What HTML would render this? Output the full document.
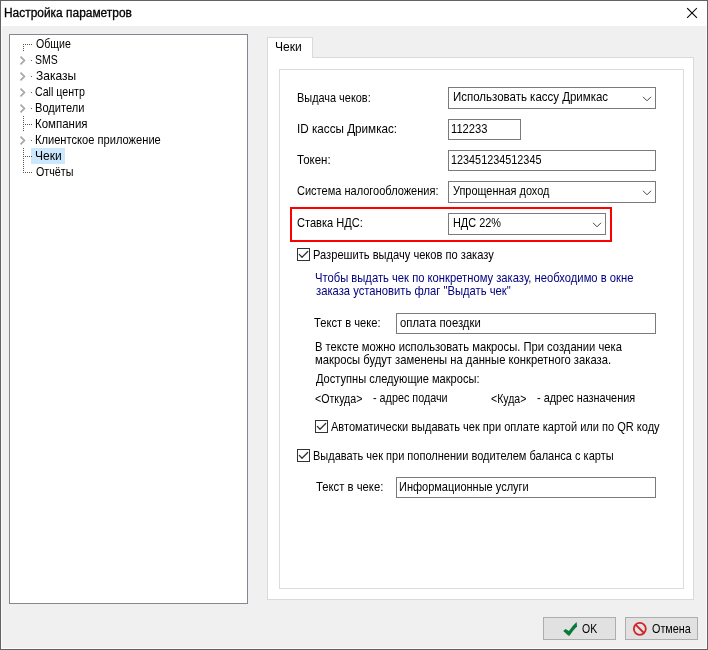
<!DOCTYPE html>
<html lang="ru"><head><meta charset="utf-8"><title>Настройка параметров</title><style>
html,body{margin:0;padding:0}
body{width:708px;height:650px;background:#626262;position:relative;overflow:hidden;font-family:"Liberation Sans",sans-serif}
.b{position:absolute;box-sizing:border-box}
.t{position:absolute;white-space:pre;line-height:16px;transform-origin:0 0;display:block}
.tl{position:absolute;left:0;top:0;width:708px;height:650px;will-change:transform}
.dh{background:repeating-linear-gradient(to right,#555 0 1px,transparent 1px 2px)}
.dv{background:repeating-linear-gradient(to bottom,#555 0 1px,transparent 1px 2px)}
</style></head>
<body>
<div class="b" style="left:1px;top:1px;width:706px;height:648px;background:#f0f0f0;border:1px solid #fbfbfb"></div>
<div class="b" style="left:1px;top:1px;width:706px;height:25px;background:#fff"></div>
<svg class="b" style="left:686px;top:7px" width="13" height="13" viewBox="0 0 13 13"><path d="M1.5 1.4 L10.5 10.4 M10.5 1.4 L1.5 10.4" stroke="#000" stroke-width="1.05" stroke-linecap="square" fill="none"/></svg>
<div class="b" style="left:9px;top:34px;width:239px;height:570px;border:1px solid #828790;background:#fff;"></div>
<div class="b" style="left:31px;top:148px;width:34px;height:16px;background:#cce8ff"></div>
<div class="b dh" style="left:23px;top:44px;width:9px;height:1px"></div>
<svg class="b" style="left:18px;top:54px" width="10" height="12" viewBox="0 0 10 12"><path d="M2.5 2.6 L6.4 6.5 L2.5 10.4" stroke="#a6a6a6" stroke-width="1.7" fill="none"/></svg>
<div class="b" style="left:31px;top:60px;width:1px;height:1px;background:#555"></div>
<svg class="b" style="left:18px;top:70px" width="10" height="12" viewBox="0 0 10 12"><path d="M2.5 2.6 L6.4 6.5 L2.5 10.4" stroke="#a6a6a6" stroke-width="1.7" fill="none"/></svg>
<div class="b" style="left:31px;top:76px;width:1px;height:1px;background:#555"></div>
<svg class="b" style="left:18px;top:86px" width="10" height="12" viewBox="0 0 10 12"><path d="M2.5 2.6 L6.4 6.5 L2.5 10.4" stroke="#a6a6a6" stroke-width="1.7" fill="none"/></svg>
<div class="b" style="left:31px;top:92px;width:1px;height:1px;background:#555"></div>
<svg class="b" style="left:18px;top:102px" width="10" height="12" viewBox="0 0 10 12"><path d="M2.5 2.6 L6.4 6.5 L2.5 10.4" stroke="#a6a6a6" stroke-width="1.7" fill="none"/></svg>
<div class="b" style="left:31px;top:108px;width:1px;height:1px;background:#555"></div>
<div class="b dh" style="left:23px;top:124px;width:9px;height:1px"></div>
<svg class="b" style="left:18px;top:134px" width="10" height="12" viewBox="0 0 10 12"><path d="M2.5 2.6 L6.4 6.5 L2.5 10.4" stroke="#a6a6a6" stroke-width="1.7" fill="none"/></svg>
<div class="b" style="left:31px;top:140px;width:1px;height:1px;background:#555"></div>
<div class="b dh" style="left:23px;top:156px;width:9px;height:1px"></div>
<div class="b dh" style="left:23px;top:172px;width:9px;height:1px"></div>
<div class="b dv" style="left:23px;top:44px;width:1px;height:8px"></div>
<div class="b dv" style="left:23px;top:116px;width:1px;height:15px"></div>
<div class="b dv" style="left:23px;top:148px;width:1px;height:25px"></div>
<div class="b" style="left:267px;top:57px;width:427px;height:543px;border:1px solid #d9d9d9;background:#fff;"></div>
<div class="b" style="left:267px;top:37px;width:46px;height:21px;border:1px solid #d9d9d9;background:#fff;border-bottom:none;height:21px"></div>
<div class="b" style="left:279px;top:69px;width:405px;height:520px;border:1px solid #dcdcdc;background:#fff;"></div>
<div class="b" style="left:448px;top:87px;width:208px;height:22px;border:1px solid #7a7a7a;background:#fff;"></div><svg class="b" style="left:641px;top:93px" width="12" height="10" viewBox="0 0 12 10"><path d="M2 3.8 L6 7.8 L10 3.8" stroke="#444" stroke-width="1" fill="none"/></svg>
<div class="b" style="left:448px;top:119px;width:73px;height:21px;border:1px solid #7a7a7a;background:#fff;"></div>
<div class="b" style="left:448px;top:150px;width:208px;height:21px;border:1px solid #7a7a7a;background:#fff;"></div>
<div class="b" style="left:448px;top:181px;width:208px;height:22px;border:1px solid #7a7a7a;background:#fff;"></div><svg class="b" style="left:641px;top:187px" width="12" height="10" viewBox="0 0 12 10"><path d="M2 3.8 L6 7.8 L10 3.8" stroke="#444" stroke-width="1" fill="none"/></svg>
<div class="b" style="left:448px;top:213px;width:158px;height:22px;border:1px solid #7a7a7a;background:#fff;"></div><svg class="b" style="left:591px;top:219px" width="12" height="10" viewBox="0 0 12 10"><path d="M2 3.8 L6 7.8 L10 3.8" stroke="#444" stroke-width="1" fill="none"/></svg>
<div class="b" style="left:290px;top:207px;width:322px;height:35px;border:2px solid #f00"></div>
<div class="b" style="left:297px;top:248px;width:13px;height:13px;border:1px solid #333;background:#fff"></div><svg class="b" style="left:297px;top:248px" width="13" height="13" viewBox="0 0 13 13"><path d="M2.3 6.4 L5 9.3 L10.7 3.5" stroke="#333" stroke-width="1.3" stroke-linecap="round" stroke-linejoin="round" fill="none"/></svg>
<div class="b" style="left:315px;top:420px;width:13px;height:13px;border:1px solid #333;background:#fff"></div><svg class="b" style="left:315px;top:420px" width="13" height="13" viewBox="0 0 13 13"><path d="M2.3 6.4 L5 9.3 L10.7 3.5" stroke="#333" stroke-width="1.3" stroke-linecap="round" stroke-linejoin="round" fill="none"/></svg>
<div class="b" style="left:297px;top:449px;width:13px;height:13px;border:1px solid #333;background:#fff"></div><svg class="b" style="left:297px;top:449px" width="13" height="13" viewBox="0 0 13 13"><path d="M2.3 6.4 L5 9.3 L10.7 3.5" stroke="#333" stroke-width="1.3" stroke-linecap="round" stroke-linejoin="round" fill="none"/></svg>
<div class="b" style="left:396px;top:313px;width:260px;height:21px;border:1px solid #7a7a7a;background:#fff;"></div>
<div class="b" style="left:396px;top:477px;width:260px;height:21px;border:1px solid #7a7a7a;background:#fff;"></div>
<div class="b" style="left:543px;top:617px;width:73px;height:23px;border:1px solid #adadad;background:#e1e1e1;"></div>
<div class="b" style="left:625px;top:617px;width:73px;height:23px;border:1px solid #adadad;background:#e1e1e1;"></div>
<svg class="b" style="left:555px;top:614px" width="30" height="30" viewBox="0 0 30 30"><path d="M8.2 17 L10.6 15 L13.9 17.1 Q17.4 11.6 21.6 7.9 L22.1 12.8 L21 13.6 Q17.6 17 14.5 21.8 L13.2 21.4 Z" fill="#0a7a3c"/></svg>
<svg class="b" style="left:630px;top:619px" width="20" height="20" viewBox="0 0 20 20"><circle cx="9.8" cy="9.8" r="6" stroke="#d2232a" stroke-width="1.8" fill="none"/><path d="M5.6 5.6 L14 14" stroke="#d2232a" stroke-width="1.8"/></svg>
<div class="tl">
<span class="t" style="left:3.51px;top:5.03px;font-size:12px;color:#000;transform:scaleX(0.9941);-webkit-text-stroke:0.3px #000;">Настройка параметров</span>
<span class="t" style="left:35.59px;top:35.70px;font-size:13px;color:#000;transform:scaleX(0.8144);">Общие</span>
<span class="t" style="left:35.40px;top:51.70px;font-size:13px;color:#000;transform:scaleX(0.8037);">SMS</span>
<span class="t" style="left:35.54px;top:67.70px;font-size:13px;color:#000;transform:scaleX(0.9226);">Заказы</span>
<span class="t" style="left:35.39px;top:83.70px;font-size:13px;color:#000;transform:scaleX(0.8193);">Call центр</span>
<span class="t" style="left:35.15px;top:99.70px;font-size:13px;color:#000;transform:scaleX(0.8527);">Водители</span>
<span class="t" style="left:35.12px;top:115.70px;font-size:13px;color:#000;transform:scaleX(0.8826);">Компания</span>
<span class="t" style="left:35.14px;top:131.70px;font-size:13px;color:#000;transform:scaleX(0.8557);">Клиентское приложение</span>
<span class="t" style="left:35.07px;top:147.70px;font-size:13px;color:#000;transform:scaleX(0.9259);">Чеки</span>
<span class="t" style="left:35.59px;top:163.70px;font-size:13px;color:#000;transform:scaleX(0.8239);">Отчёты</span>
<span class="t" style="left:274.77px;top:38.70px;font-size:13px;color:#000;transform:scaleX(0.9259);">Чеки</span>
<span class="t" style="left:296.86px;top:89.70px;font-size:13px;color:#000;transform:scaleX(0.8398);">Выдача чеков:</span>
<span class="t" style="left:296.58px;top:120.70px;font-size:13px;color:#000;transform:scaleX(0.8993);">ID кассы Дримкас:</span>
<span class="t" style="left:297.48px;top:151.70px;font-size:13px;color:#000;transform:scaleX(0.8849);">Токен:</span>
<span class="t" style="left:297.06px;top:182.70px;font-size:13px;color:#000;transform:scaleX(0.8473);">Система налогообложения:</span>
<span class="t" style="left:297.06px;top:214.70px;font-size:13px;color:#000;transform:scaleX(0.8517);">Ставка НДС:</span>
<span class="t" style="left:452.87px;top:88.70px;font-size:13px;color:#000;transform:scaleX(0.8836);">Использовать кассу Дримкас</span>
<span class="t" style="left:451.14px;top:120.70px;font-size:13px;color:#000;transform:scaleX(0.8589);">112233</span>
<span class="t" style="left:451.17px;top:151.70px;font-size:13px;color:#000;transform:scaleX(0.8341);">123451234512345</span>
<span class="t" style="left:453.33px;top:182.70px;font-size:13px;color:#000;transform:scaleX(0.8399);">Упрощенная доход</span>
<span class="t" style="left:452.91px;top:214.70px;font-size:13px;color:#000;transform:scaleX(0.8386);">НДС 22%</span>
<span class="t" style="left:313.15px;top:246.70px;font-size:13px;color:#000;transform:scaleX(0.8549);">Разрешить выдачу чеков по заказу</span>
<span class="t" style="left:315.14px;top:269.70px;font-size:13px;color:#000080;transform:scaleX(0.8632);">Чтобы выдать чек по конкретному заказу, необходимо в окне</span>
<span class="t" style="left:315.78px;top:282.70px;font-size:13px;color:#000080;transform:scaleX(0.8641);">заказа установить флаг "Выдать чек"</span>
<span class="t" style="left:314.09px;top:314.70px;font-size:13px;color:#000;transform:scaleX(0.8592);">Текст в чеке:</span>
<span class="t" style="left:399.57px;top:314.70px;font-size:13px;color:#000;transform:scaleX(0.8689);">оплата поездки</span>
<span class="t" style="left:315.39px;top:338.70px;font-size:13px;color:#000;transform:scaleX(0.8626);">В тексте можно использовать макросы. При создании чека</span>
<span class="t" style="left:315.39px;top:351.70px;font-size:13px;color:#000;transform:scaleX(0.8642);">макросы будут заменены на данные конкретного заказа.</span>
<span class="t" style="left:316.25px;top:370.70px;font-size:13px;color:#000;transform:scaleX(0.8519);">Доступны следующие макросы:</span>
<span class="t" style="left:315.14px;top:390.70px;font-size:13px;color:#000;transform:scaleX(0.8186);">&lt;Откуда&gt;</span>
<span class="t" style="left:372.58px;top:389.70px;font-size:13px;color:#000;transform:scaleX(0.8305);">- адрес подачи</span>
<span class="t" style="left:491.39px;top:390.70px;font-size:13px;color:#000;transform:scaleX(0.8107);">&lt;Куда&gt;</span>
<span class="t" style="left:536.58px;top:389.70px;font-size:13px;color:#000;transform:scaleX(0.8380);">- адрес назначения</span>
<span class="t" style="left:331.25px;top:418.70px;font-size:13px;color:#000;transform:scaleX(0.8488);">Автоматически выдавать чек при оплате картой или по QR коду</span>
<span class="t" style="left:313.15px;top:447.70px;font-size:13px;color:#000;transform:scaleX(0.8476);">Выдавать чек при пополнении водителем баланса с карты</span>
<span class="t" style="left:315.78px;top:478.70px;font-size:13px;color:#000;transform:scaleX(0.8684);">Текст в чеке:</span>
<span class="t" style="left:399.15px;top:478.70px;font-size:13px;color:#000;transform:scaleX(0.8463);">Информационные услуги</span>
<span class="t" style="left:582.35px;top:620.70px;font-size:13px;color:#000;transform:scaleX(0.8056);">OK</span>
<span class="t" style="left:652.33px;top:620.70px;font-size:13px;color:#000;transform:scaleX(0.8324);">Отмена</span>
</div>
</body></html>
